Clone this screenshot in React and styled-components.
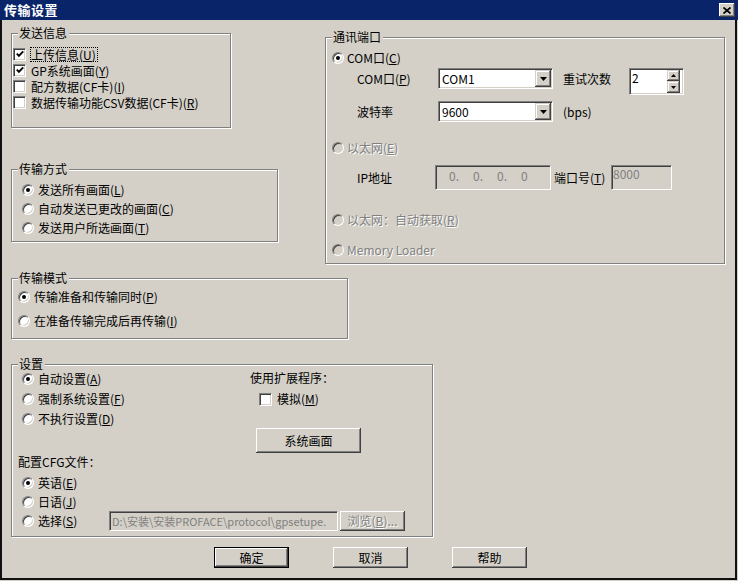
import React from 'react';
import styled, { createGlobalStyle, css } from 'styled-components';

const FONT = `"Noto Sans CJK SC", "Noto Sans", "Liberation Sans", sans-serif`;

const GlobalStyle = createGlobalStyle`
  html, body { margin: 0; padding: 0; background: #d4d0c8; }
  body { font-family: ${FONT}; font-size: 12px; line-height: 14px; color: #000; }
  * { box-sizing: border-box; }
`;

const raised = css`
  background: #d4d0c8;
  box-shadow: inset -1px -1px 0 #404040, inset 1px 1px 0 #fff, inset -2px -2px 0 #808080, inset 2px 2px 0 #d4d0c8;
`;

const sunken = css`
  border: 1px solid;
  border-color: #808080 #fff #fff #808080;
  box-shadow: inset 1px 1px 0 #404040, inset -1px -1px 0 #d4d0c8;
`;

const Window = styled.div`
  width: 738px;
  height: 581px;
  display: flex;
  flex-direction: column;
  background: #d4d0c8;
  overflow: hidden;
`;

const TitleBar = styled.div`
  flex: none;
  height: 20px;
  background: #0a246a;
  display: flex;
  align-items: center;
  justify-content: space-between;
  padding: 0 3px 0 4px;
`;

const TitleText = styled.span`
  color: #fff;
  font-weight: bold;
  font-size: 13px;
  letter-spacing: 0.5px;
`;

const CloseBtn = styled.span`
  ${raised};
  width: 16px;
  height: 14px;
  display: flex;
  align-items: center;
  justify-content: center;
`;

const Frame = styled.div`
  width: 737px;
  height: 560px;
  border: 2px solid #101010;
  border-top: none;
`;

const Content = styled.div`
  display: grid;
  grid-template-columns: 314px 401px;
  padding-left: 9px;
`;

const Stack = styled.div`
  display: flex;
  flex-direction: column;
`;

const Group = styled.div`
  position: relative;
  flex: none;
  width: ${(p) => p.$w}px;
  height: ${(p) => p.$h}px;
  margin-top: ${(p) => p.$mt || 0}px;
  padding: ${(p) => p.$pad};
  border: 1px solid #808080;
  box-shadow: 1px 1px 0 #fff, inset 1px 1px 0 #fff;
  display: flex;
  flex-direction: column;
  ${(p) => p.$span && css`grid-column: 1 / -1;`}
`;

const Legend = styled.span`
  position: absolute;
  top: -8px;
  left: 6px;
  padding: 0 2px 0 1px;
  background: #d4d0c8;
  line-height: 14px;
  white-space: nowrap;
`;

const Option = styled.label`
  display: flex;
  align-items: center;
  flex: none;
  height: ${(p) => p.$h || 16}px;
  gap: ${(p) => (p.$gap == null ? 4 : p.$gap)}px;
  margin-top: ${(p) => p.$mt || 0}px;
  ${(p) => p.$w && css`width: ${p.$w}px;`}
  white-space: nowrap;
  color: ${(p) => (p.$disabled ? '#808080' : '#000')};
  text-shadow: ${(p) => (p.$disabled ? '1px 1px 0 #fff' : 'none')};
`;

const OptText = styled.span`
  border: 1px dotted ${(p) => (p.$focus ? '#000' : 'transparent')};
  padding: 0 1px 0 0;
  line-height: 13px;
`;

const CheckBox = styled.span`
  ${sunken};
  flex: none;
  width: 13px;
  height: 13px;
  background: #fff;
  display: flex;
  align-items: center;
  justify-content: center;
`;

const RadioDot = styled.span`
  flex: none;
  position: relative;
  width: 12px;
  height: 12px;
  border-radius: 50%;
  border: 1px solid;
  border-color: #808080 #fff #fff #808080;
  box-shadow: inset 1px 1px 0 #404040, inset -1px -1px 0 #d4d0c8;
  background: ${(p) => (p.$disabled ? '#d4d0c8' : '#fff')};
  &::after {
    content: '';
    display: ${(p) => (p.$checked ? 'block' : 'none')};
    position: absolute;
    left: 3px;
    top: 3px;
    width: 4px;
    height: 4px;
    border-radius: 50%;
    background: #000;
  }
`;

const Row = styled.div`
  display: flex;
  align-items: ${(p) => p.$align || 'center'};
  flex: none;
  height: ${(p) => p.$h}px;
  margin-top: ${(p) => p.$mt || 0}px;
  margin-left: ${(p) => p.$ml || 0}px;
  color: ${(p) => (p.$disabled ? '#808080' : '#000')};
`;

const Label = styled.span`
  flex: none;
  width: ${(p) => p.$w}px;
  padding-left: ${(p) => p.$pl || 0}px;
  line-height: ${(p) => p.$lh || 21}px;
  white-space: nowrap;
`;

const Combo = styled.div`
  ${sunken};
  flex: none;
  width: ${(p) => p.$w}px;
  height: 21px;
  padding: 1px;
  background: #fff;
  display: flex;
  align-items: stretch;
  justify-content: space-between;
`;

const ComboText = styled.span`
  padding-left: 2px;
  line-height: 17px;
  font-size: 12px;
`;

const ArrowBtn = styled.span`
  background: #d4d0c8;
  box-shadow: inset -1px -1px 0 #404040, inset 1px 1px 0 #d4d0c8, inset -2px -2px 0 #808080, inset 2px 2px 0 #fff;
  width: ${(p) => p.$w || 16}px;
  ${(p) => p.$h && css`height: ${p.$h}px;`}
  display: flex;
  align-items: center;
  justify-content: center;
`;

const Spin = styled.div`
  ${sunken};
  flex: none;
  align-self: flex-start;
  width: 55px;
  height: 27px;
  padding: 1px 3px 1px 1px;
  background: #fff;
  display: flex;
  justify-content: space-between;
`;

const SpinText = styled.span`
  padding-left: 1px;
  line-height: 15px;
`;

const SpinBtns = styled.div`
  display: flex;
  flex-direction: column;
`;

const DisabledField = styled.div`
  ${sunken};
  flex: none;
  width: ${(p) => p.$w}px;
  height: ${(p) => p.$h}px;
  background: #d4d0c8;
  color: #808080;
  display: flex;
  align-items: ${(p) => p.$align || 'center'};
  padding-left: ${(p) => p.$pl || 2}px;
  overflow: hidden;
  white-space: nowrap;
  font-size: ${(p) => p.$fs || 12}px;
`;

const IpSeg = styled.span`
  width: 24px;
  flex: none;
`;

const Button = styled.button`
  ${raised};
  font-family: ${FONT};
  font-size: 12px;
  color: #000;
  border: none;
  padding: 0;
  flex: none;
  width: ${(p) => p.$w}px;
  height: ${(p) => p.$h}px;
  margin-top: ${(p) => p.$mt || 0}px;
  margin-left: ${(p) => p.$ml || 0}px;
  display: flex;
  align-items: center;
  justify-content: center;
  ${(p) =>
    p.$default &&
    css`
      box-shadow: inset 0 0 0 1px #000, inset -2px -2px 0 #404040, inset 2px 2px 0 #fff,
        inset -3px -3px 0 #808080, inset 3px 3px 0 #d4d0c8;
    `}
  ${(p) =>
    p.$disabled &&
    css`
      color: #808080;
      text-shadow: 1px 1px 0 #fff;
    `}
`;

const SettingsTop = styled.div`
  display: flex;
  height: 83px;
  flex: none;
`;

const Col = styled.div`
  display: flex;
  flex-direction: column;
  flex: none;
  width: ${(p) => (p.$w ? `${p.$w}px` : 'auto')};
`;

const ButtonBar = styled.div`
  grid-column: 1 / -1;
  display: flex;
  gap: 44px;
  margin-top: 10px;
  padding-left: 203px;
`;

const DownArrow = () => (
  <svg width="7" height="4" viewBox="0 0 7 4">
    <polygon points="0,0 7,0 3.5,4" fill="#000" />
  </svg>
);

const SmallArrow = ({ up }) => (
  <svg width="5" height="3" viewBox="0 0 5 3">
    <polygon points={up ? '0,3 5,3 2.5,0' : '0,0 5,0 2.5,3'} fill="#000" />
  </svg>
);

const CheckMark = () => (
  <svg width="8" height="8" viewBox="0 0 8 8">
    <polyline points="0.8,3.6 2.9,5.8 7.2,1.4" fill="none" stroke="#000" strokeWidth="1.9" />
  </svg>
);

const Check = ({ checked, children, focus }) => (
  <Option $h={16}>
    <CheckBox>{checked && <CheckMark />}</CheckBox>
    <OptText $focus={focus}>{children}</OptText>
  </Option>
);

const Radio = ({ checked, disabled, children, h = 19, gap = 4, mt, w }) => (
  <Option $h={h} $gap={gap} $mt={mt} $w={w} $disabled={disabled}>
    <RadioDot $checked={checked} $disabled={disabled} />
    <span>{children}</span>
  </Option>
);

export default function App() {
  return (
    <>
      <GlobalStyle />
      <Window>
        <TitleBar>
          <TitleText>传输设置</TitleText>
          <CloseBtn>
            <svg width="8" height="7" viewBox="0 0 8 7">
              <path d="M0.5 0.5 L7.5 6.5 M7.5 0.5 L0.5 6.5" stroke="#000" strokeWidth="1.7" />
            </svg>
          </CloseBtn>
        </TitleBar>
        <Frame>
          <Content>
            <Stack>
              <Group $w={220} $h={95} $mt={13} $pad="12px 0 0 1px">
                <Legend>发送信息</Legend>
                <Check checked focus>
                  上传信息(<u>U</u>)
                </Check>
                <Check checked>
                  GP系统画面(<u>Y</u>)
                </Check>
                <Check>
                  配方数据(CF卡)(<u>I</u>)
                </Check>
                <Check>
                  数据传输功能CSV数据(CF卡)(<u>R</u>)
                </Check>
              </Group>
              <Group $w={267} $h={73} $mt={41} $pad="10px 0 0 10px">
                <Legend>传输方式</Legend>
                <Radio checked>
                  发送所有画面(<u>L</u>)
                </Radio>
                <Radio>
                  自动发送已更改的画面(<u>C</u>)
                </Radio>
                <Radio>
                  发送用户所选画面(<u>T</u>)
                </Radio>
              </Group>
            </Stack>

            <Group $w={400} $h={227} $mt={17} $pad="10px 0 0 6px">
              <Legend>通讯端口</Legend>
              <Radio checked h={20} gap={3}>
                COM口(<u>C</u>)
              </Radio>
              <Row $h={21} $ml={25} $align="flex-start">
                <Label $w={81}>
                  COM口(<u>P</u>)
                </Label>
                <Combo $w={115}>
                  <ComboText>COM1</ComboText>
                  <ArrowBtn>
                    <DownArrow />
                  </ArrowBtn>
                </Combo>
                <Label $w={76} $pl={10}>
                  重试次数
                </Label>
                <Spin>
                  <SpinText>2</SpinText>
                  <SpinBtns>
                    <ArrowBtn $w={13} $h={11}>
                      <SmallArrow up />
                    </ArrowBtn>
                    <ArrowBtn $w={13} $h={12}>
                      <SmallArrow />
                    </ArrowBtn>
                  </SpinBtns>
                </Spin>
              </Row>
              <Row $h={21} $ml={25} $mt={12} $align="flex-start">
                <Label $w={81}>波特率</Label>
                <Combo $w={115}>
                  <ComboText>9600</ComboText>
                  <ArrowBtn>
                    <DownArrow />
                  </ArrowBtn>
                </Combo>
                <Label $w={76} $pl={10}>
                  (bps)
                </Label>
              </Row>
              <Radio disabled h={20} gap={3} mt={16}>
                以太网(<u>E</u>)
              </Radio>
              <Row $h={25} $ml={25} $mt={7}>
                <Label $w={78} $lh={25}>
                  IP地址
                </Label>
                <DisabledField $w={116} $h={25} $pl={13} $align="flex-start">
                  <IpSeg style={{ lineHeight: '20px' }}>0.</IpSeg>
                  <IpSeg style={{ lineHeight: '20px' }}>0.</IpSeg>
                  <IpSeg style={{ lineHeight: '20px' }}>0.</IpSeg>
                  <IpSeg style={{ lineHeight: '20px' }}>0</IpSeg>
                </DisabledField>
                <Label $w={60} $pl={3} $lh={25}>
                  端口号(<u>T</u>)
                </Label>
                <DisabledField $w={61} $h={25} $pl={1} $align="flex-start">
                  <span style={{ lineHeight: '15px' }}>8000</span>
                </DisabledField>
              </Row>
              <Radio disabled h={20} gap={3} mt={20}>
                以太网：自动获取(<u>R</u>)
              </Radio>
              <Radio disabled h={20} gap={3} mt={10}>
                Memory Loader
              </Radio>
            </Group>

            <Group $span $w={337} $h={61} $mt={14} $pad="6px 0 0 6px">
              <Legend>传输模式</Legend>
              <Radio checked h={24}>
                传输准备和传输同时(<u>P</u>)
              </Radio>
              <Radio h={24}>
                在准备传输完成后再传输(<u>I</u>)
              </Radio>
            </Group>

            <Group $span $w={422} $h={173} $mt={25} $pad="4px 0 0 10px">
              <Legend>设置</Legend>
              <SettingsTop>
                <Col $w={228}>
                  <Radio checked h={20}>
                    自动设置(<u>A</u>)
                  </Radio>
                  <Radio h={20}>
                    强制系统设置(<u>F</u>)
                  </Radio>
                  <Radio h={20}>
                    不执行设置(<u>D</u>)
                  </Radio>
                </Col>
                <Col>
                  <Row $h={22} $mt={-2}>
                    使用扩展程序：
                  </Row>
                  <Row $h={20} $ml={9}>
                    <Option $h={20} $gap={5}>
                      <CheckBox />
                      <span>
                        模拟(<u>M</u>)
                      </span>
                    </Option>
                  </Row>
                  <Button $w={105} $h={25} $mt={19} $ml={6}>
                    系统画面
                  </Button>
                </Col>
              </SettingsTop>
              <Row $h={20} $ml={-4}>
                配置CFG文件：
              </Row>
              <Radio checked h={19} mt={1}>
                英语(<u>E</u>)
              </Radio>
              <Radio h={19}>
                日语(<u>J</u>)
              </Radio>
              <Row $h={19}>
                <Radio h={19} w={87}>
                  选择(<u>S</u>)
                </Radio>
                <DisabledField $w={229} $h={20} $pl={2} $fs={11}>
                  D:\安装\安装PROFACE\protocol\gpsetupe.
                </DisabledField>
                <Button $w={65} $h={20} $ml={2} $disabled>
                  浏览(<u>B</u>)...
                </Button>
              </Row>
            </Group>

            <ButtonBar>
              <Button $w={75} $h={21} $default>
                确定
              </Button>
              <Button $w={75} $h={21}>
                取消
              </Button>
              <Button $w={75} $h={21}>
                帮助
              </Button>
            </ButtonBar>
          </Content>
        </Frame>
      </Window>
    </>
  );
}
